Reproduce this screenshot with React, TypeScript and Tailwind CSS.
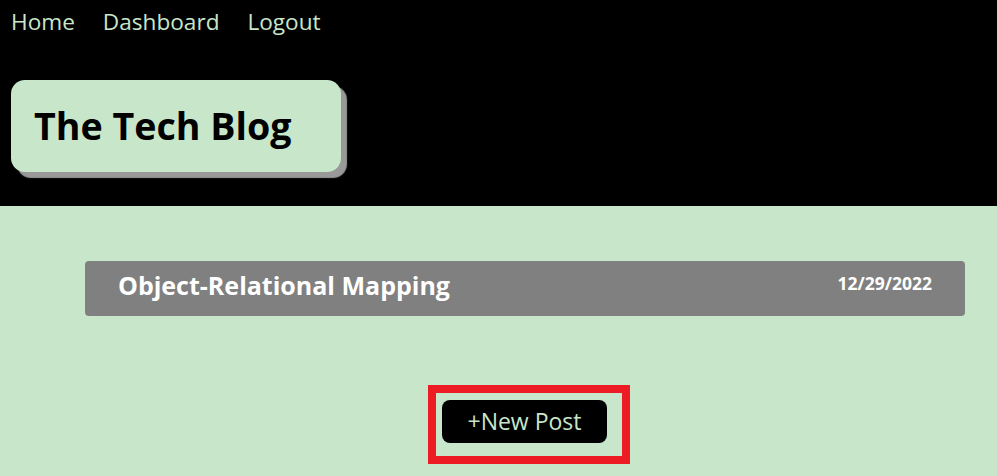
import React from 'react';

const posts = [{ id: 1, title: 'Object-Relational Mapping', date: '12/29/2022' }];

export default function App() {
  return (
    <div className="min-h-[476px] bg-[#c8e6c9] font-['Open_Sans',sans-serif]">
      <header className="bg-black h-[206px] pt-[4px]">
        <nav className="flex gap-[28px] pl-[11px] text-[22.6px] text-[#c8e6c9] leading-[36px]">
          <a href="#">Home</a>
          <a href="#">Dashboard</a>
          <a href="#">Logout</a>
        </nav>
        <div className="ml-[11px] mt-[40px] w-[330px] h-[92px] rounded-[14px] bg-[#c8e6c9] shadow-[6px_6px_1px_#999] flex items-center pl-[23px]">
          <h1 className="text-[37.6px] font-bold text-black">The Tech Blog</h1>
        </div>
      </header>
      <main className="pt-[55px] pl-[85px] pr-[32px]">
        {posts.map((post) => (
          <div
            key={post.id}
            className="h-[55px] rounded-[4px] bg-[#808080] flex items-center justify-between pl-[33px] pr-[33px]"
          >
            <h2 className="text-[25px] font-bold text-white -mt-[5px]">{post.title}</h2>
            <span className="text-[17.5px] font-bold text-white -mt-[10px]">{post.date}</span>
          </div>
        ))}
        <div className="flex mt-[69px] pl-[343px]">
          <div className="border-[8px] border-[#ed1c24] pl-[6px] pr-[15px] pt-[7px] pb-[13px]">
            <button className="bg-black text-[#c8e6c9] text-[23px] rounded-[8px] w-[165px] h-[43px]">
              +New Post
            </button>
          </div>
        </div>
      </main>
    </div>
  );
}
